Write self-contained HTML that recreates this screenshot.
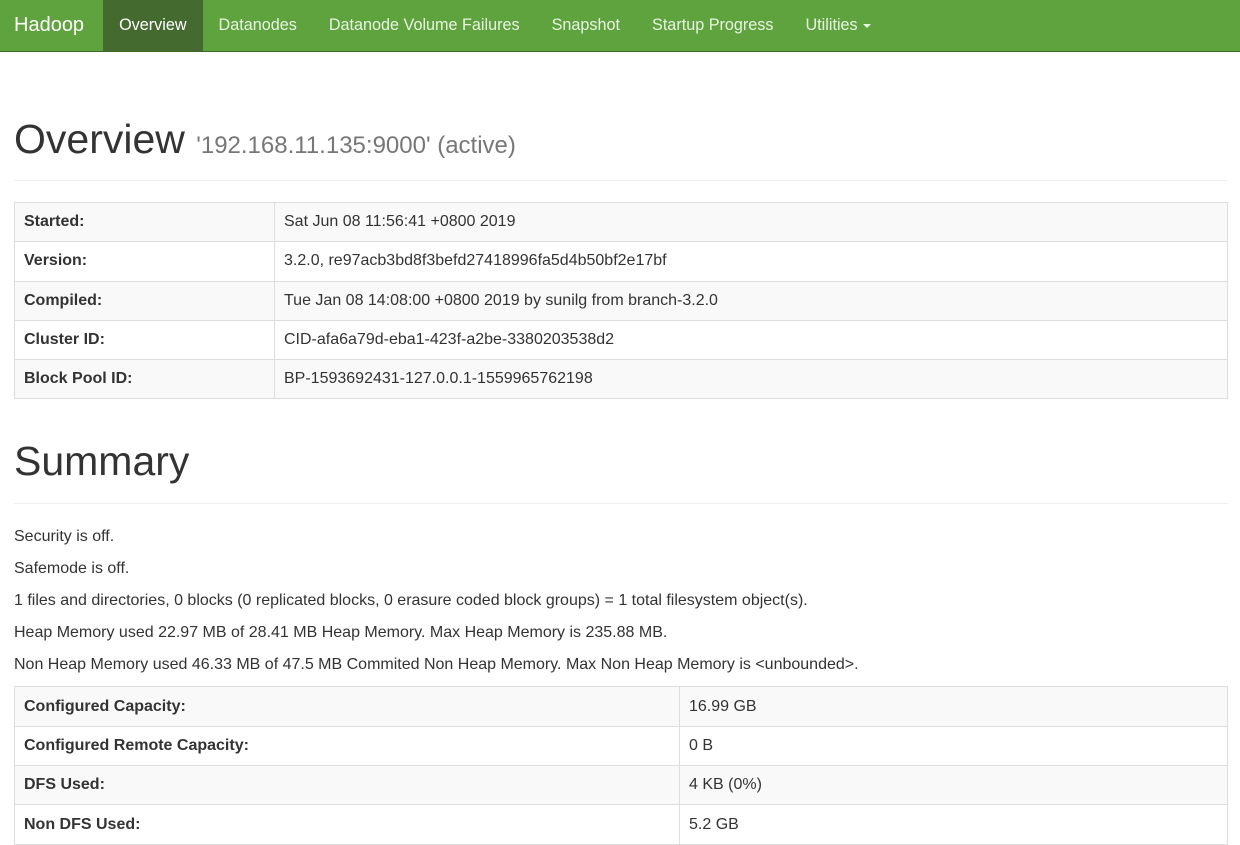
<!DOCTYPE html>
<html><head><meta charset="utf-8"><style>
*{box-sizing:border-box}
body{margin:0;font-family:"Liberation Sans",sans-serif;font-size:16px;color:#333;background:#fff;width:1240px;height:808px;overflow:hidden}
.nav{height:52px;background:#5fa33e;border-bottom:1px solid #3e6b2a;display:flex;align-items:stretch}
.nav a{color:#e8f3e2;text-decoration:none;padding:0 16px;display:flex;align-items:center;font-size:16.2px}
.nav a.brand{color:#fff;font-size:20px;padding:0 19px 0 14px}
.nav a.act{background:#446a30;color:#fff}
.caret{display:inline-block;border-top:4px solid #e8f3e2;border-left:4px solid transparent;border-right:4px solid transparent;margin-left:5px;vertical-align:middle}
.wrap{padding:0 12px 0 14px}
h1{font-weight:400;font-size:41px;margin:0;color:#333;line-height:44px}
h1 small{font-size:24px;color:#777}
hr{border:0;border-top:1px solid #eee;margin:0}
table{border-collapse:collapse;width:1214px}
td{border:1px solid #ddd;padding:0 9px;height:39.3px;font-size:16px}
tr:nth-child(odd) td{background:#f9f9f9}
td:first-child{font-weight:bold}
p{margin:0;height:32px;line-height:22px;font-size:16px}
</style></head><body>
<div class="nav"><a class="brand">Hadoop</a><a class="act">Overview</a><a>Datanodes</a><a>Datanode Volume Failures</a><a>Snapshot</a><a>Startup Progress</a><a>Utilities<span class="caret"></span></a></div>
<div class="wrap">
<div style="height:65px"></div>
<h1>Overview <small>'192.168.11.135:9000' (active)</small></h1>
<div style="height:12px"></div><hr><div style="height:21px"></div>
<table>
<tr><td style="width:260px">Started:</td><td>Sat Jun 08 11:56:41 +0800 2019</td></tr>
<tr><td>Version:</td><td>3.2.0, re97acb3bd8f3befd27418996fa5d4b50bf2e17bf</td></tr>
<tr><td>Compiled:</td><td>Tue Jan 08 14:08:00 +0800 2019 by sunilg from branch-3.2.0</td></tr>
<tr><td>Cluster ID:</td><td>CID-afa6a79d-eba1-423f-a2be-3380203538d2</td></tr>
<tr><td>Block Pool ID:</td><td>BP-1593692431-127.0.0.1-1559965762198</td></tr>
</table>
<div style="height:40px"></div>
<h1>Summary</h1>
<div style="height:20px"></div><hr><div style="height:22px"></div>
<p>Security is off.</p>
<p>Safemode is off.</p>
<p>1 files and directories, 0 blocks (0 replicated blocks, 0 erasure coded block groups) = 1 total filesystem object(s).</p>
<p>Heap Memory used 22.97 MB of 28.41 MB Heap Memory. Max Heap Memory is 235.88 MB.</p>
<p>Non Heap Memory used 46.33 MB of 47.5 MB Commited Non Heap Memory. Max Non Heap Memory is &lt;unbounded&gt;.</p>
<table>
<tr><td style="width:665px">Configured Capacity:</td><td>16.99 GB</td></tr>
<tr><td>Configured Remote Capacity:</td><td>0 B</td></tr>
<tr><td>DFS Used:</td><td>4 KB (0%)</td></tr>
<tr><td>Non DFS Used:</td><td>5.2 GB</td></tr>
</table>
</div>
</body></html>
